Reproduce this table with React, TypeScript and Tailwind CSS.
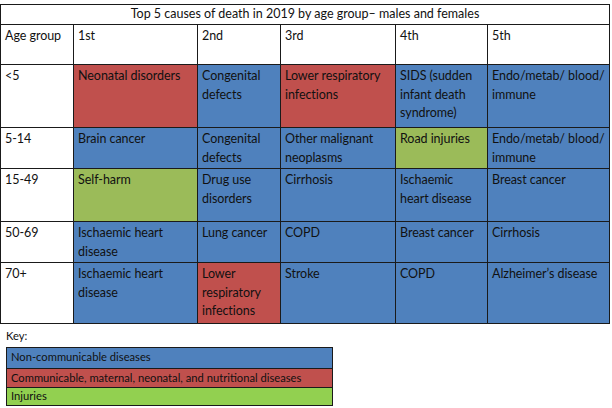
const BLUE = "bg-[#4f81bd]";
const RED = "bg-[#c0504d]";
const GREEN = "bg-[#9bbb59]";

type Cell = [string, string];

const rows: { age: string; h: string; cells: Cell[] }[] = [
  {
    age: "<5",
    h: "h-[62px]",
    cells: [
      ["Neonatal disorders", RED],
      ["Congenital defects", BLUE],
      ["Lower respiratory infections", RED],
      ["SIDS (sudden infant death syndrome)", BLUE],
      ["Endo/metab/ blood/ immune", BLUE],
    ],
  },
  {
    age: "5-14",
    h: "h-[40px]",
    cells: [
      ["Brain cancer", BLUE],
      ["Congenital defects", BLUE],
      ["Other malignant neoplasms", BLUE],
      ["Road injuries", GREEN],
      ["Endo/metab/ blood/ immune", BLUE],
    ],
  },
  {
    age: "15-49",
    h: "h-[52px]",
    cells: [
      ["Self-harm", GREEN],
      ["Drug use disorders", BLUE],
      ["Cirrhosis", BLUE],
      ["Ischaemic heart disease", BLUE],
      ["Breast cancer", BLUE],
    ],
  },
  {
    age: "50-69",
    h: "h-[40px]",
    cells: [
      ["Ischaemic heart disease", BLUE],
      ["Lung cancer", BLUE],
      ["COPD", BLUE],
      ["Breast cancer", BLUE],
      ["Cirrhosis", BLUE],
    ],
  },
  {
    age: "70+",
    h: "h-[60px]",
    cells: [
      ["Ischaemic heart disease", BLUE],
      ["Lower respiratory infections", RED],
      ["Stroke", BLUE],
      ["COPD", BLUE],
      ["Alzheimer’s disease", BLUE],
    ],
  },
];

// last column gets no right padding so "Endo/metab/ blood/" stays on one line
const cellText = "pl-[4px] pt-[2px] leading-[18.5px] text-[12.5px] text-[#111] tracking-[-0.05px]";

export default function App() {
  return (
    <div className="w-[612px] h-[408px] bg-white pt-[4px] font-['Lato',sans-serif]">
      <div className="grid grid-cols-[72px_123px_82px_114px_91px_121px] gap-px bg-[#1a1a1a] p-px w-[610px]">
        <div className="col-span-6 h-[19px] bg-white text-center leading-[18px] text-[12.5px] text-[#111]">
          Top 5 causes of death in 2019 by age group– males and females
        </div>
        {["Age group", "1st", "2nd", "3rd", "4th", "5th"].map((t) => (
          <div key={t} className={`h-[39px] bg-white pr-[4px] ${cellText}`}>
            {t}
          </div>
        ))}
        {rows.map((r) => (
          <div key={r.age} className="contents">
            <div className={`${r.h} bg-white pr-[4px] ${cellText}`}>{r.age}</div>
            {r.cells.map(([t, bg], i) => (
              <div key={i} className={`${r.h} ${bg} ${i === 4 ? "pr-0" : "pr-[4px]"} ${cellText}`}>
                {t}
              </div>
            ))}
          </div>
        ))}
      </div>

      <div className="mt-[5px] ml-[6px] text-[11.2px] leading-[14px] text-[#111]">Key:</div>
      <div className="mt-[4px] ml-[6px] w-[327px] grid gap-px bg-[#1a1a1a] p-px text-[11.2px] text-[#111]">
        <div className="h-[20px] bg-[#4f81bd] px-[4px] leading-[18px]">Non-communicable diseases</div>
        <div className="h-[18px] bg-[#c0504d] px-[4px] leading-[18px]">
          Communicable, maternal, neonatal, and nutritional diseases
        </div>
        <div className="h-[17px] bg-[#92d050] px-[4px] leading-[16px]">Injuries</div>
      </div>
    </div>
  );
}
